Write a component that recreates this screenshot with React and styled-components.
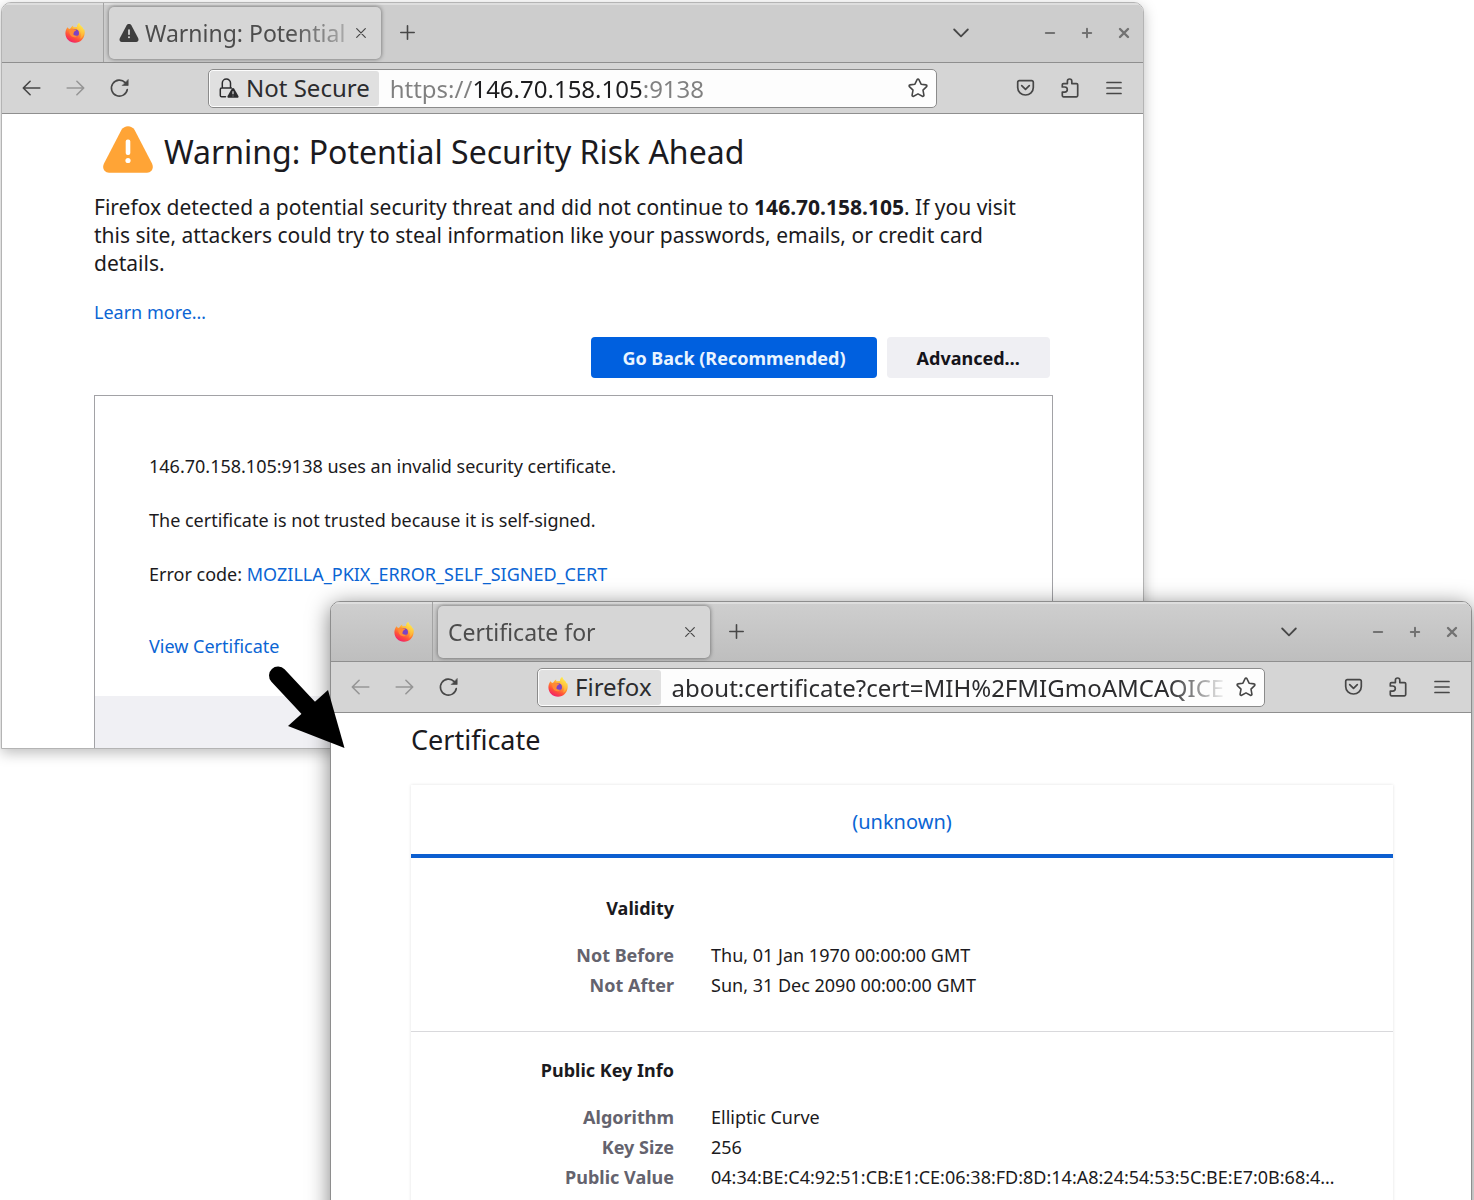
import React from "react";
import styled, { createGlobalStyle, css } from "styled-components";

const GlobalStyle = createGlobalStyle`
  *, *::before, *::after { box-sizing: border-box; }
  html, body { margin: 0; background: #ffffff; }
  body { font-family: "Noto Sans", "Open Sans", sans-serif; color: #1b1a20; }
  h1, h2, h3, p, dl, dd, dt { margin: 0; }
  button, input { font: inherit; color: inherit; }
  svg { display: block; flex: none; }
`;

/* ---------- desktop and window frame ---------- */

const Desktop = styled.main`
  position: relative;
  height: 100vh;
  min-height: 760px;
  overflow: hidden;
`;

const WindowFrame = styled.section`
  position: absolute;
  display: flex;
  flex-direction: column;
  overflow: hidden;
  background: #ffffff;
  border: 1px solid ${(p) => (p.$active ? "#8e8e8e" : "#b4b4b4")};
  border-radius: 10px 10px 0 0;
  box-shadow: ${(p) =>
    p.$active ? "0 4px 22px rgba(0, 0, 0, 0.5)" : "0 4px 14px rgba(0, 0, 0, 0.26)"};
`;

const WarningWindow = styled(WindowFrame)`
  top: 2px;
  left: 1px;
  right: 330px;
  height: 747px;
`;

const CertificateWindow = styled(WindowFrame)`
  top: 601px;
  left: 330px;
  right: 2px;
`;

const TabBar = styled.header`
  display: flex;
  align-items: center;
  height: 60px;
  flex: none;
  padding-right: 1px;
  color: #4c4c4c;
  border-bottom: 1px solid #8f8f8f;
  background: ${(p) => (p.$active ? "linear-gradient(#cfcfcf, #bebebe)" : "#cdcdcd")};
  box-shadow: inset 0 2px 0 #dedede;
`;

const PinnedTab = styled.button`
  display: flex;
  align-items: center;
  justify-content: flex-end;
  align-self: stretch;
  width: 102px;
  padding: 0 18px 0 0;
  border: 0;
  border-right: 1px solid #a3a3a3;
  background: transparent;
`;

const ActiveTab = styled.div`
  display: flex;
  align-items: center;
  width: 272px;
  height: 52px;
  margin-left: 5px;
  padding: 0 12px 0 10px;
  gap: 6px;
  border-radius: 5px;
  background: #d6d6d6;
  box-shadow: 0 0 4px rgba(0, 0, 0, 0.5);
`;

const TabTitle = styled.span`
  flex: 1;
  min-width: 0;
  overflow: hidden;
  white-space: nowrap;
  font-size: 23px;
  line-height: 32px;
  mask-image: linear-gradient(to right, #000 calc(100% - 60px), rgba(0, 0, 0, 0.3));
`;

const IconButton = styled.button`
  display: flex;
  align-items: center;
  justify-content: center;
  flex: none;
  width: ${(p) => p.$width || 24}px;
  height: 32px;
  padding: 0;
  border: 0;
  background: transparent;
  color: ${(p) => (p.disabled ? "#969696" : "#474747")};
`;

const NewTab = styled(IconButton)`
  margin-left: 8px;
`;

const Spring = styled.div`
  flex: 1;
`;

const WindowControls = styled.div`
  display: flex;
  margin-left: 58px;
`;

const ControlButton = styled(IconButton)`
  color: #727272;
`;

const NavBar = styled.nav`
  display: flex;
  align-items: center;
  height: 51px;
  flex: none;
  padding: 0 7px;
  background: #d5d5d5;
  border-bottom: 1px solid #8f8f8f;
`;

const UrlBar = styled.div`
  display: flex;
  align-items: center;
  flex: 1;
  min-width: 0;
  height: 39px;
  margin: 0 67px;
  padding: 1px 6px 1px 1px;
  border: 1px solid #8b8b8b;
  border-radius: 5px;
  background: #fdfdfd;
`;

const Identity = styled.button`
  display: flex;
  align-items: center;
  align-self: stretch;
  gap: 7px;
  padding: 0 9px;
  border: 0;
  border-radius: 3px;
  background: #e0e0e0;
  color: #2c2c2e;
  font-size: 24px;
  line-height: 32px;
  white-space: nowrap;
`;

const UrlInput = styled.input`
  flex: 1;
  min-width: 0;
  height: 34px;
  margin: 0 6px 0 11px;
  padding: 0;
  border: 0;
  outline: 0;
  color: #2c2c2e;
  background: transparent;
  font-size: 24px;
  ${(p) =>
    p.$host &&
    css`
      background: linear-gradient(to right, #808080 83px, #1c1c1e 83px 254px, #808080 254px);
      -webkit-background-clip: text;
      background-clip: text;
      -webkit-text-fill-color: transparent;
    `}
  ${(p) =>
    p.$fade &&
    css`
      mask-image: linear-gradient(to right, #000 calc(100% - 60px), transparent);
    `}
`;

/* ---------- warning page ---------- */

const WarningPage = styled.div`
  display: flex;
  flex-direction: column;
  flex: 1;
  min-height: 0;
  padding: 12px 90px 0 92px;
`;

const WarningHeading = styled.div`
  display: flex;
  align-items: flex-start;
  gap: 10px;
  padding-left: 8px;
`;

const PageTitle = styled.h1`
  font-size: 32px;
  line-height: 52px;
  font-weight: 400;
  white-space: nowrap;
`;

const Intro = styled.p`
  margin-top: 15px;
  padding-right: 16px;
  font-size: 21px;
  line-height: 28px;
`;

const TextLink = styled.a`
  color: #0b65d4;
  text-decoration: none;
`;

const LearnMore = styled.p`
  margin-top: 22px;
  font-size: 18px;
  line-height: 26px;
`;

const Actions = styled.div`
  display: flex;
  justify-content: flex-end;
  gap: 10px;
  margin-top: 12px;
  padding-right: 3px;
`;

const ActionButton = styled.button`
  height: 41px;
  padding: 0 ${(p) => (p.$primary ? 31 : 30)}px;
  border: 0;
  border-radius: 4px;
  font-size: 18px;
  font-weight: 700;
  white-space: nowrap;
  color: ${(p) => (p.$primary ? "#e9f4ff" : "#15141a")};
  background: ${(p) => (p.$primary ? "#0060df" : "#efeff3")};
`;

const AdvancedPanel = styled.div`
  flex: 1;
  display: flex;
  flex-direction: column;
  margin-top: 17px;
  border: 1px solid #a2a2a6;
  border-bottom: 0;
`;

const PanelText = styled.div`
  display: flex;
  flex-direction: column;
  gap: 28px;
  padding: 57px 54px 0;
  font-size: 18px;
  line-height: 26px;
`;

const ViewCertificate = styled.p`
  padding: 46px 54px 37px;
  font-size: 18px;
  line-height: 26px;
`;

const PanelFooter = styled.div`
  flex: 1;
  background: #f0f0f4;
`;

/* ---------- certificate page ---------- */

const CertificatePage = styled.div`
  padding: 8px 78px 40px 80px;
`;

const CertificateTitle = styled.h1`
  font-size: 27px;
  line-height: 38px;
  font-weight: 400;
`;

const Card = styled.div`
  margin-top: 26px;
  box-shadow: 0 0 3px rgba(0, 0, 0, 0.12);
`;

const CertificateTab = styled.button`
  display: block;
  width: 100%;
  height: 73px;
  padding: 5px 0 0;
  border: 0;
  border-bottom: 4px solid #0d5fd0;
  background: transparent;
  color: #0b65d4;
  font-size: 20px;
  line-height: 28px;
`;

const InfoGroup = styled.section`
  padding: 35px 37px 31px 0;
  font-size: 18px;
  line-height: 30px;
  & + & {
    padding-top: 23px;
    border-top: 1px solid #d9d9dc;
  }
`;

const GroupTitle = styled.h2`
  width: 263px;
  margin-bottom: 17px;
  text-align: right;
  font-size: 18px;
  line-height: 30px;
  font-weight: 700;
`;

const InfoList = styled.dl`
  display: grid;
  grid-template-columns: 263px minmax(0, 1fr);
  column-gap: 37px;
`;

const InfoLabel = styled.dt`
  text-align: right;
  font-weight: 700;
  color: #64636e;
`;

const InfoValue = styled.dd`
  white-space: nowrap;
`;

const Pointer = styled.svg`
  position: absolute;
  top: 660px;
  left: 262px;
`;

/* ---------- icons ---------- */

const Stroke = ({ size = 20, width = 1.6, box = 20, children }) => (
  <svg width={size} height={size} viewBox={`0 0 ${box} ${box}`} fill="none" stroke="currentColor"
    strokeWidth={width} strokeLinecap="round" strokeLinejoin="round" aria-hidden="true">
    {children}
  </svg>
);

const FirefoxLogo = ({ id }) => (
  <svg width="20" height="20" viewBox="0 0 20 20" aria-hidden="true">
    <defs>
      <linearGradient id={`${id}-flame`} x1="0.85" y1="0.05" x2="0.35" y2="1">
        <stop offset="0.05" stopColor="#fff44f" />
        <stop offset="0.45" stopColor="#ffa02f" />
        <stop offset="0.75" stopColor="#ff4f3a" />
        <stop offset="1" stopColor="#f0206c" />
      </linearGradient>
      <linearGradient id={`${id}-crest`} x1="0.7" y1="0" x2="0.4" y2="1">
        <stop offset="0" stopColor="#fff44f" />
        <stop offset="1" stopColor="#ff9a30" />
      </linearGradient>
    </defs>
    <path fill={`url(#${id}-flame)`}
      d="M2.6 4.2 4 6l1.6-.6C6 4.200 7 3 8.300 2.400c-.3.7-.2 1.300.2 1.800L12 4c.2-1.800 1-3.200 2.200-4 .2 1.400 1 2.400 2.200 3.600 1.100 1 1.900 2.100 2.300 3.200l.5-.7c.4 1.300.6 2.600.5 4C19.500 15.800 15.300 19.800 10 19.800S.4 15.700.4 10.300C.4 8 1.200 5.900 2.600 4.200Z" />
    <circle cx="10.200" cy="10.100" r="3.800" fill="#7d42c4" />
    <path fill="#ff8a35" d="M4.300 6.200c1.700-1 3.400-.8 4.600.3 1 .1 2 .1 2.300.4-.2.900-1.600 1.300-2.200 1.900-.3.600.1 1.500-.8 2.300.8 1.600 2.900 2.200 4.800 1.100-1.200 2.300-5 2.800-7 .6-1.600-1.700-2-4.600-1.700-6.600Z" />
    <path fill={`url(#${id}-crest)`} d="M12.100 4.100C12.200 2.300 13 .8 14.200 0c.2 1.400 1 2.400 2.200 3.600 1.800 1.700 2.700 3.900 2.400 6.600-.3 2.500-1.700 4.600-3.700 5.600 1-2.200 1-5.300-.2-7.200-.7-1-1.800-1.500-2.600-2.300-.3-.6-.4-1.300-.2-2.200Z" />
  </svg>
);

const WarningGlyph = ({ size, height, fill, mark }) => (
  <svg width={size} height={height} viewBox="0 0 50 47" aria-hidden="true">
    <path fill={fill} d="M18.500 3.700C21.400-1 28.600-1 31.500 3.700L49 37.500c2.200 4.300-.2 9.200-5 9.200H6c-4.800 0-7.200-4.900-5-9.200Z" />
    <rect x="22.700" y="13.500" width="4.600" height="15.500" rx="2" fill={mark} />
    <circle cx="25" cy="34.500" r="2.600" fill={mark} />
  </svg>
);

const BackIcon = () => <Stroke><path d="M18.800 10H2.500M9.100 3.300 2.300 10l6.800 6.700" /></Stroke>;
const ForwardIcon = () => <Stroke><path d="M2.200 10h16.300M11.900 3.300 18.700 10l-6.800 6.700" /></Stroke>;
const ReloadIcon = () => (
  <Stroke>
    <path d="M18.300 11.500A8 8 0 1 1 16.200 4.600l1.300 1.300" />
    <path d="M19.200 1.800v5.700h-5.700Z" fill="currentColor" strokeWidth="0.600" />
  </Stroke>
);
const CloseTabIcon = () => <Stroke size={10} box={10} width={1.2}><path d="m.7.700 8.600 8.600M9.300.700.700 9.300" /></Stroke>;
const PlusIcon = () => <Stroke size={15} box={15} width={1.6}><path d="M7.500.800v13.400M.8 7.500h13.400" /></Stroke>;
const ChevronIcon = () => <Stroke size={16} box={16} width={1.8}><path d="m1.200 4.500 6.800 6.800 6.800-6.800" /></Stroke>;
const MinimizeIcon = () => <Stroke size={12} box={12} width={2}><path d="M1.800 6h8.400" /></Stroke>;
const MaximizeIcon = () => <Stroke size={12} box={12} width={2}><path d="M6 1.800v8.400M1.800 6h8.400" /></Stroke>;
const CloseIcon = () => <Stroke size={12} box={12} width={2.4}><path d="m2 2 8 8M10 2l-8 8" /></Stroke>;
const StarIcon = () => (
  <Stroke>
    <path d="M9.100 1.700a1 1 0 0 1 1.800 0l2.200 4.500 4.900.7a1 1 0 0 1 .6 1.700L15 12.100l.9 5a1 1 0 0 1-1.500 1.100L10 15.900l-4.400 2.300a1 1 0 0 1-1.500-1.100l.9-5L1.400 8.600A1 1 0 0 1 2 6.900l4.900-.7Z" />
  </Stroke>
);
const PocketIcon = () => (
  <Stroke width={1.7}>
    <path d="M3.300 2.600h12.400a1.600 1.600 0 0 1 1.600 1.600v5.200a7.800 7.600 0 0 1-15.600 0v-5.200a1.600 1.600 0 0 1 1.600-1.600Z" />
    <path d="m5.700 7.600 3.800 3.800 3.800-3.800" />
  </Stroke>
);
const ExtensionIcon = () => (
  <Stroke width={1.7}>
    <path d="M2.300 9V6.800a1.200 1.200 0 0 1 1.200-1.200h3.900V3.200a2.200 2.200 0 0 1 4.400 0v2.400h4.700a1.200 1.200 0 0 1 1.200 1.200v10.800a1.200 1.200 0 0 1-1.200 1.200h-13a1.200 1.200 0 0 1-1.200-1.200v-3.400h2.400a2.600 2.600 0 0 0 0-5.200Z" />
  </Stroke>
);
const MenuIcon = () => <Stroke size={16} box={16} width={1.7}><path d="M1 2.500h14M1 8h14M1 13.500h14" /></Stroke>;
const InsecureLockIcon = () => (
  <svg width="20" height="20" viewBox="0 0 20 20" fill="none" aria-hidden="true">
    <path d="M6.500 18.800H2.700a1.400 1.400 0 0 1-1.400-1.400v-6a1.400 1.400 0 0 1 1.400-1.400h9.700M3.300 10V5.100a4.100 4.100 0 0 1 8.200 0V10" stroke="currentColor" strokeWidth="1.500" strokeLinecap="round" />
    <path d="M12.900 10.600a1.300 1.300 0 0 1 2.200 0l4.300 7.400a1.200 1.200 0 0 1-1 1.800H9.600a1.200 1.200 0 0 1-1-1.800Z" fill="currentColor" />
    <path d="M14 13.200v3M14 17.700v.6" stroke="#e0e0e0" strokeWidth="1.200" />
  </svg>
);

/* ---------- browser chrome ---------- */

const BrowserChrome = ({ id, active, tabIcon, title, canGoBack, identity, children }) => (
  <>
    <TabBar $active={active}>
      <PinnedTab aria-label="Pinned tab"><FirefoxLogo id={`${id}-pin`} /></PinnedTab>
      <ActiveTab>
        {tabIcon}
        <TabTitle>{title}</TabTitle>
        <IconButton $width={16} aria-label="Close tab"><CloseTabIcon /></IconButton>
      </ActiveTab>
      <NewTab $width={36} aria-label="New tab"><PlusIcon /></NewTab>
      <Spring />
      <IconButton aria-label="List all tabs"><ChevronIcon /></IconButton>
      <WindowControls>
        <ControlButton $width={37} aria-label="Minimize"><MinimizeIcon /></ControlButton>
        <ControlButton $width={37} aria-label="Maximize"><MaximizeIcon /></ControlButton>
        <ControlButton $width={37} aria-label="Close window"><CloseIcon /></ControlButton>
      </WindowControls>
    </TabBar>
    <NavBar aria-label="Navigation">
      <IconButton $width={44} aria-label="Back" disabled={!canGoBack}><BackIcon /></IconButton>
      <IconButton $width={44} aria-label="Forward" disabled><ForwardIcon /></IconButton>
      <IconButton $width={44} aria-label="Reload"><ReloadIcon /></IconButton>
      <UrlBar>
        <Identity>{identity}</Identity>
        {children}
        <IconButton aria-label="Bookmark this page"><StarIcon /></IconButton>
      </UrlBar>
      <IconButton $width={44} aria-label="Save to Pocket"><PocketIcon /></IconButton>
      <IconButton $width={44} aria-label="Extensions"><ExtensionIcon /></IconButton>
      <IconButton $width={44} aria-label="Menu"><MenuIcon /></IconButton>
    </NavBar>
  </>
);

const groups = [
  {
    title: "Validity",
    rows: [
      ["Not Before", "Thu, 01 Jan 1970 00:00:00 GMT"],
      ["Not After", "Sun, 31 Dec 2090 00:00:00 GMT"],
    ],
  },
  {
    title: "Public Key Info",
    rows: [
      ["Algorithm", "Elliptic Curve"],
      ["Key Size", "256"],
      ["Public Value", "04:34:BE:C4:92:51:CB:E1:CE:06:38:FD:8D:14:A8:24:54:53:5C:BE:E7:0B:68:4…"],
    ],
  },
];

export default function App() {
  return (
    <Desktop>
      <GlobalStyle />
      <WarningWindow>
        <BrowserChrome
          id="warning"
          canGoBack
          title="Warning: Potential"
          tabIcon={<WarningGlyph size={20} height={18} fill="#3e3e3e" mark="#d6d6d6" />}
          identity={<><InsecureLockIcon />Not Secure</>}
        >
          <UrlInput $host aria-label="Address" defaultValue="https://146.70.158.105:9138" />
        </BrowserChrome>
        <WarningPage>
          <WarningHeading>
            <WarningGlyph size={52} height={47} fill="#ffa436" mark="#ffffff" />
            <PageTitle>Warning: Potential Security Risk Ahead</PageTitle>
          </WarningHeading>
          <Intro>
            Firefox detected a potential security threat and did not continue to{" "}
            <b>146.70.158.105</b>. If you visit this site, attackers could try to steal information
            like your passwords, emails, or credit card details.
          </Intro>
          <LearnMore><TextLink href="#learn-more">Learn more…</TextLink></LearnMore>
          <Actions>
            <ActionButton $primary>Go Back (Recommended)</ActionButton>
            <ActionButton>Advanced…</ActionButton>
          </Actions>
          <AdvancedPanel>
            <PanelText>
              <p>146.70.158.105:9138 uses an invalid security certificate.</p>
              <p>The certificate is not trusted because it is self-signed.</p>
              <p>Error code: <TextLink href="#error">MOZILLA_PKIX_ERROR_SELF_SIGNED_CERT</TextLink></p>
            </PanelText>
            <ViewCertificate><TextLink href="#certificate">View Certificate</TextLink></ViewCertificate>
            <PanelFooter />
          </AdvancedPanel>
        </WarningPage>
      </WarningWindow>

      <CertificateWindow $active>
        <BrowserChrome
          id="certificate"
          active
          title="Certificate for"
          identity={<><FirefoxLogo id="identity" />Firefox</>}
        >
          <UrlInput $fade aria-label="Address" defaultValue="about:certificate?cert=MIH%2FMIGmoAMCAQICE" />
        </BrowserChrome>
        <CertificatePage id="certificate">
          <CertificateTitle>Certificate</CertificateTitle>
          <Card>
            <CertificateTab>(unknown)</CertificateTab>
            {groups.map((group) => (
              <InfoGroup key={group.title}>
                <GroupTitle>{group.title}</GroupTitle>
                <InfoList>
                  {group.rows.map(([label, value]) => (
                    <React.Fragment key={label}>
                      <InfoLabel>{label}</InfoLabel>
                      <InfoValue>{value}</InfoValue>
                    </React.Fragment>
                  ))}
                </InfoList>
              </InfoGroup>
            ))}
          </Card>
        </CertificatePage>
      </CertificateWindow>

      <Pointer width="86" height="92" viewBox="0 0 86 92" aria-hidden="true">
        <path d="M16 15.500 52 54" stroke="#000" strokeWidth="18" strokeLinecap="round" />
        <path d="M26 66 66 30l16.500 58Z" fill="#000" />
      </Pointer>
    </Desktop>
  );
}
